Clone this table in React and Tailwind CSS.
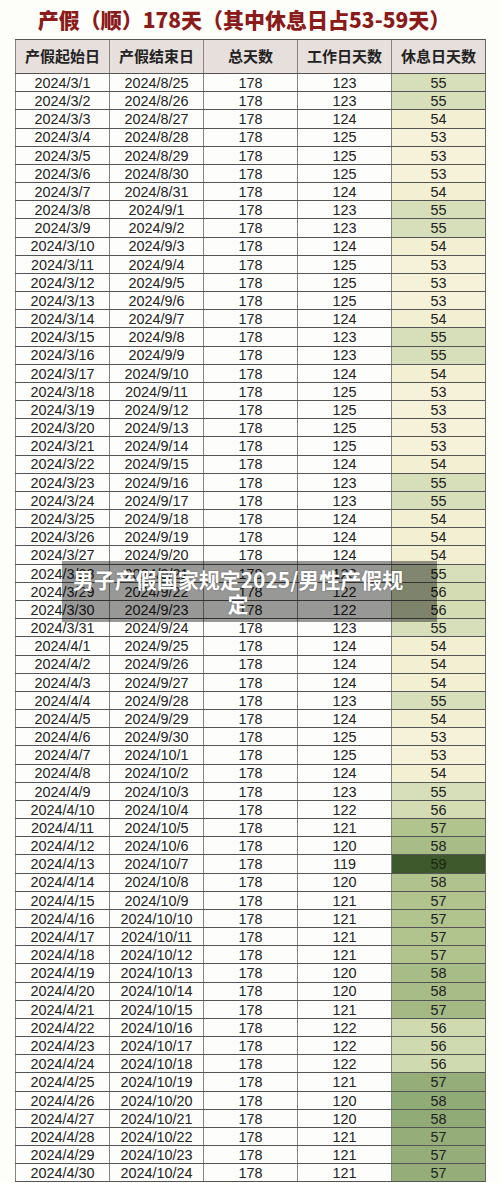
import React from "react";

const raw = [
  ["3/1", "8/25", 123], ["3/2", "8/26", 123], ["3/3", "8/27", 124], ["3/4", "8/28", 125],
  ["3/5", "8/29", 125], ["3/6", "8/30", 125], ["3/7", "8/31", 124], ["3/8", "9/1", 123],
  ["3/9", "9/2", 123], ["3/10", "9/3", 124], ["3/11", "9/4", 125], ["3/12", "9/5", 125],
  ["3/13", "9/6", 125], ["3/14", "9/7", 124], ["3/15", "9/8", 123], ["3/16", "9/9", 123],
  ["3/17", "9/10", 124], ["3/18", "9/11", 125], ["3/19", "9/12", 125], ["3/20", "9/13", 125],
  ["3/21", "9/14", 125], ["3/22", "9/15", 124], ["3/23", "9/16", 123], ["3/24", "9/17", 123],
  ["3/25", "9/18", 124], ["3/26", "9/19", 124], ["3/27", "9/20", 124], ["3/28", "9/21", 123],
  ["3/29", "9/22", 122], ["3/30", "9/23", 122], ["3/31", "9/24", 123], ["4/1", "9/25", 124],
  ["4/2", "9/26", 124], ["4/3", "9/27", 124], ["4/4", "9/28", 123], ["4/5", "9/29", 124],
  ["4/6", "9/30", 125], ["4/7", "10/1", 125], ["4/8", "10/2", 124], ["4/9", "10/3", 123],
  ["4/10", "10/4", 122], ["4/11", "10/5", 121], ["4/12", "10/6", 120], ["4/13", "10/7", 119],
  ["4/14", "10/8", 120], ["4/15", "10/9", 121], ["4/16", "10/10", 121], ["4/17", "10/11", 121],
  ["4/18", "10/12", 121], ["4/19", "10/13", 120], ["4/20", "10/14", 120], ["4/21", "10/15", 121],
  ["4/22", "10/16", 122], ["4/23", "10/17", 122], ["4/24", "10/18", 122], ["4/25", "10/19", 121],
  ["4/26", "10/20", 120], ["4/27", "10/21", 120], ["4/28", "10/22", 121], ["4/29", "10/23", 121],
  ["4/30", "10/24", 121],
];

const C = {
  k53: "bg-[#f6f2da]",
  k54: "bg-[#f3efd3]",
  k55: "bg-[#d6dfb9]",
  k56: "bg-[#d3dcb3]",
  k56b: "bg-[#d0dab0]",
  k57: "bg-[#b1c48e]",
  k57b: "bg-[#a4b984]",
  k57c: "bg-[#95ae79]",
  k58: "bg-[#a8bc87]",
  k58b: "bg-[#b0c38e]",
  k58c: "bg-[#91ab76]",
  k59: "bg-[#3e5a2c] text-[#1a2610]",
};

function colorFor(i, v) {
  if (v === 53) return C.k53;
  if (v === 54) return C.k54;
  if (v === 55) return C.k55;
  if (v === 56) return i >= 52 ? C.k56b : C.k56;
  if (v === 57) return i >= 55 ? C.k57c : i === 51 ? C.k57b : C.k57;
  if (v === 58) return i >= 56 ? C.k58c : i === 44 ? C.k58b : C.k58;
  return C.k59;
}

const cell = "flex items-center justify-center border-l-[1.5px] border-[#858585]";
const rowCell = cell + " pt-[1px]";

export default function App() {
  return (
    <div
      className="relative w-[500px] h-[1183px] overflow-hidden bg-[#fdfdfa]"
      style={{ fontFamily: '"Liberation Sans", "Noto Sans CJK SC", sans-serif' }}
    >
      <div
        className="h-[39px] flex items-center justify-center pr-[12px] text-[21px] font-black text-[#8b1a1a] leading-none"
        style={{ fontFamily: '"Noto Sans CJK SC", sans-serif' }}
      >
        产假（顺）178天（其中休息日占53-59天）
      </div>

      <div className="ml-[15px] w-[471px] border-r-[1.5px] border-[#666]">
        <div
          className="grid grid-cols-[94px_94px_94px_94px_94px] h-[35px] bg-[#e6dfdc] border-t border-b border-[#555] text-[15px] font-bold text-[#222]"
          style={{ fontFamily: '"Noto Sans CJK SC", sans-serif' }}
        >
          <div className={cell + " border-[#555]"}>产假起始日</div>
          <div className={cell}>产假结束日</div>
          <div className={cell}>总天数</div>
          <div className={cell}>工作日天数</div>
          <div className={cell}>休息日天数</div>
        </div>
        {raw.map(([s, e, w], i) => {
          const rest = 178 - w;
          return (
            <div
              key={i}
              className="grid grid-cols-[94px_94px_94px_94px_94px] h-[18.18px] border-b border-[#555] text-[14.4px] leading-none text-[#222] bg-[#fdfdfb]"
            >
              <div className={rowCell + " border-[#555]"}>2024/{s}</div>
              <div className={rowCell}>2024/{e}</div>
              <div className={rowCell}>178</div>
              <div className={rowCell}>{w}</div>
              <div className={rowCell + " " + colorFor(i, rest)}>{rest}</div>
            </div>
          );
        })}
      </div>

      <div
        className="absolute left-[62px] top-[561px] w-[375px] h-[61px] bg-black/40 pl-[10px] pr-[33px] pt-[6px] text-center text-[21px] leading-[24px] font-bold text-white"
        style={{ fontFamily: '"Noto Sans CJK SC", sans-serif', textShadow: "0 0 2px rgba(0,0,0,0.35)" }}
      >
        男子产假国家规定2025/男性产假规
        <br />
        定
      </div>
    </div>
  );
}
